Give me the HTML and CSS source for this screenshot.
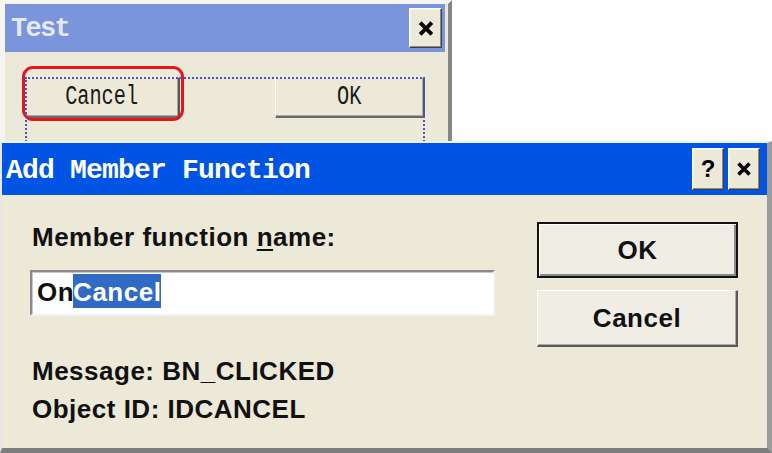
FILE: index.html
```html
<!DOCTYPE html>
<html>
<head>
<meta charset="utf-8">
<link rel="stylesheet" href="styles.css">
</head>
<body>
<div class="screen">
  <div class="win-test">
    <div class="tb tb-inactive">
      <span class="tb-title tb-title-test">Test</span>
      <span class="cap-btn cap-btn-test"><svg class="x-icon" viewBox="0 0 16 16"><path d="M2.5 2.5 L13.5 13.5 M13.5 2.5 L2.5 13.5"/></svg></span>
    </div>
    <div class="test-body">
      <div class="btn-row">
        <div class="cbtn cbtn-cancel"><span class="cbtn-text">Cancel</span></div>
        <div class="cbtn cbtn-ok"><span class="cbtn-text">OK</span></div>
      </div>
    </div>
  </div>
  <div class="dlg">
    <div class="tb tb-active">
      <span class="tb-title tb-title-dlg">Add Member Function</span>
      <div class="caps">
        <span class="cap-btn cap-btn-dlg"><span class="q">?</span></span>
        <span class="cap-btn cap-btn-dlg"><svg class="x-icon x-icon-sm" viewBox="0 0 16 16"><path d="M2.5 2.5 L13.5 13.5 M13.5 2.5 L2.5 13.5"/></svg></span>
      </div>
    </div>
    <div class="dlg-body">
      <div class="dlg-left">
        <div class="lbl">Member function <u>n</u>ame:</div>
        <div class="edit"><span class="edit-text">On</span><span class="sel">Cancel</span></div>
        <div class="info info-first">Message: BN_CLICKED</div>
        <div class="info">Object ID: IDCANCEL</div>
      </div>
      <div class="dlg-right">
        <div class="pbtn pbtn-default">OK</div>
        <div class="pbtn pbtn-cancel">Cancel</div>
      </div>
    </div>
  </div>
</div>
</body>
</html>
```
FILE: styles.css
```css
* { box-sizing: border-box; }
html, body { margin: 0; padding: 0; background: #ffffff; }
body { width: 772px; height: 453px; overflow: hidden; font-family: "Liberation Sans", Arial, sans-serif; }

.screen { width: 772px; height: 453px; display: flex; flex-direction: column; }

/* ---------- background "Test" window ---------- */
.win-test {
  width: 452px;
  height: 141px;
  background: #ece9d8;
  border-top: 4px solid #f6f5f1;
  border-left: 5px solid #f6f5f1;
  border-right: 4px solid #858585;
  padding-right: 3px;
  display: flex;
  flex-direction: column;
}

.tb { display: flex; align-items: center; justify-content: space-between; }
.tb-inactive { height: 48px; background: #7a95dc; padding: 0 3px 0 6px; }
.tb-active { height: 52px; background: #0054e3; padding: 0 7px 0 4px; }

.tb-title { font-family: "Liberation Mono", "Courier New", monospace; font-weight: bold; white-space: nowrap; }
.tb-title-test { color: #e4e9f7; font-size: 27px; letter-spacing: -1.7px; padding-top: 2px; }
.tb-title-dlg { color: #ffffff; font-size: 28px; letter-spacing: -0.8px; padding-top: 2px; }

.cap-btn {
  display: flex; align-items: center; justify-content: center;
  background: #ece9d8;
  border-top: 1px solid #ffffff;
  border-left: 1px solid #ffffff;
  border-right: 1px solid #404040;
  border-bottom: 1px solid #404040;
  box-shadow: inset -1px -1px 0 #8a8a8a, inset 1px 1px 0 #f4f3ee;
}
.cap-btn-test { width: 33px; height: 40px; }
.cap-btn-dlg { width: 32px; height: 42px; }
.caps { display: flex; gap: 4px; }

.x-icon { width: 18px; height: 17px; }
.x-icon path { stroke: #000; stroke-width: 3.6; fill: none; }
.x-icon-sm { width: 16px; height: 16px; }
.q { font-family: "Liberation Sans", Arial, sans-serif; font-weight: bold; font-size: 24px; color: #000; line-height: 1; }

.test-body { height: 89px; overflow: hidden; padding: 25px 0 0 20px; }
.btn-row { position: relative; width: 400px; display: flex; justify-content: space-between; }
.btn-row::after {
  content: "";
  position: absolute;
  top: 0; left: 0; right: 0; height: 200px;
  border: 2px dotted #5050c8;
  pointer-events: none;
}

.cbtn {
  height: 41px;
  display: flex; align-items: center; justify-content: center;
  background: #ece9d8;
  border-top: 1px solid #ffffff;
  border-left: 1px solid #ffffff;
  border-right: 2px solid #555555;
  border-bottom: 2px solid #6a6a6a;
  box-shadow: inset -1px -1px 0 #a8a8a8;
  position: relative;
}
.cbtn-cancel { width: 155px; }
.cbtn-ok { width: 150px; }
.cbtn-text {
  display: inline-block;
  font-family: "Liberation Mono", "Courier New", monospace;
  font-size: 27px;
  color: #1a1a1a;
  transform: scaleX(0.75);
}
.cbtn-cancel::before {
  content: "";
  position: absolute;
  top: -12px; left: -4px; right: -6px; bottom: -5px;
  border: 3px solid #e8141b;
  border-radius: 11px;
}

/* ---------- "Add Member Function" dialog ---------- */
.dlg {
  width: 772px;
  height: 312px;
  border-top: 2px solid #f3f3f3;
  border-left: 2px solid #e6e6e6;
  border-right: 5px solid #9b9b9b;
  border-bottom: 5px solid #7d7d7d;
  background: #ece9d8;
  display: flex;
  flex-direction: column;
}
.dlg-body {
  flex: 1;
  display: flex;
  align-items: flex-start;
  gap: 42px;
  padding: 27px 29px 0 28px;
}
.dlg-left { width: 465px; display: flex; flex-direction: column; }
.dlg-right { width: 201px; display: flex; flex-direction: column; gap: 12px; }

.lbl, .info, .edit, .pbtn {
  font-family: "Liberation Sans", Arial, sans-serif;
  font-weight: bold;
  font-size: 26px;
  letter-spacing: 0.5px;
  color: #111111;
}
.lbl { line-height: 30px; padding-left: 2px; }
.lbl u { text-decoration-thickness: 2px; text-underline-offset: 3px; }

.edit {
  margin-top: 18px;
  height: 46px;
  background: #ffffff;
  border-top: 2px solid #8a8a8a;
  border-left: 2px solid #8a8a8a;
  border-right: 2px solid #f4f4f4;
  border-bottom: 2px solid #f4f4f4;
  box-shadow: inset 1px 1px 0 #c8c8c8;
  padding: 2px 5px;
  display: flex;
  align-items: flex-start;
  white-space: nowrap;
}
.edit-text { line-height: 32px; padding-top: 2px; }
.sel { display: inline-block; line-height: 32px; padding-top: 2px; background: #316ac5; color: #ffffff; margin-left: -1px; }

.info { line-height: 38px; padding-left: 2px; }
.info-first { margin-top: 36px; }

.pbtn {
  width: 201px;
  display: flex; align-items: center; justify-content: center;
  background: #efede4;
  border-top: 1px solid #ffffff;
  border-left: 1px solid #ffffff;
  border-right: 2px solid #5a5a5a;
  border-bottom: 2px solid #5a5a5a;
  box-shadow: inset -1px -1px 0 #aaaaaa;
}
.pbtn-default {
  height: 56px;
  border: 2px solid #111111;
  box-shadow: inset 1px 1px 0 #ffffff, inset -2px -2px 0 #8a8a8a;
}
.pbtn-cancel { height: 57px; }
```
